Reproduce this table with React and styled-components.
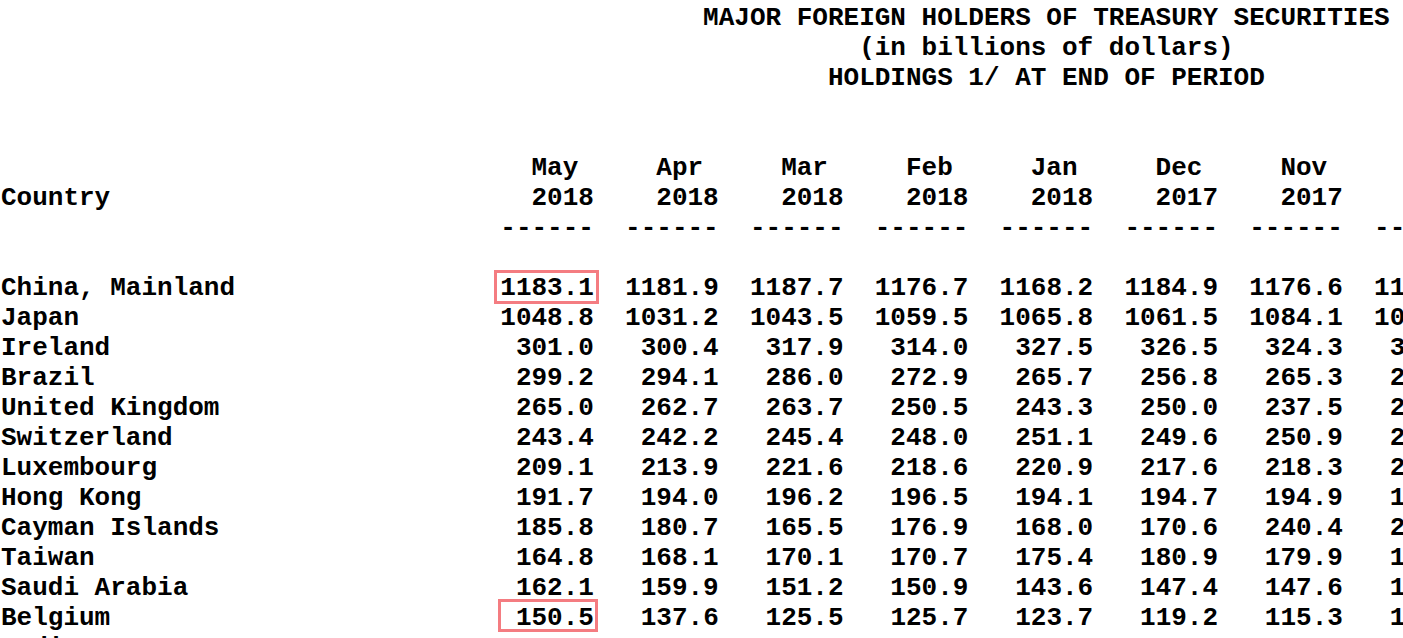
import React from 'react';
import styled, { createGlobalStyle } from 'styled-components';

const GlobalStyle = createGlobalStyle`
  html, body {
    margin: 0;
    padding: 0;
    background: #fff;
    overflow: hidden;
  }
`;

const Report = styled.div`
  padding: 3px 0 0 1px;
  font-family: "Liberation Mono", "Courier New", monospace;
  font-weight: bold;
  font-size: 26px;
  line-height: 30px;
  color: #000;
  white-space: pre;
  width: 1600px;
  height: 638px;
  overflow: hidden;
`;

const Line = styled.div`
  height: 30px;
`;

const Mark = styled.span`
  position: relative;

  &::after {
    content: '';
    position: absolute;
    inset: ${(p) => p.$inset};
    border: 3px solid #f47c81;
    pointer-events: none;
  }
`;

const title = [
  ' '.repeat(45) + 'MAJOR FOREIGN HOLDERS OF TREASURY SECURITIES',
  ' '.repeat(55) + '(in billions of dollars)',
  ' '.repeat(53) + 'HOLDINGS 1/ AT END OF PERIOD',
];

const months = ['May', 'Apr', 'Mar', 'Feb', 'Jan', 'Dec', 'Nov', 'Oct'];
const years = ['2018', '2018', '2018', '2018', '2018', '2017', '2017', '2017'];

const rows = [
  ['China, Mainland', ['1183.1', '1181.9', '1187.7', '1176.7', '1168.2', '1184.9', '1176.6', '1189.2']],
  ['Japan', ['1048.8', '1031.2', '1043.5', '1059.5', '1065.8', '1061.5', '1084.1', '1093.6']],
  ['Ireland', ['301.0', '300.4', '317.9', '314.0', '327.5', '326.5', '324.3', '319.8']],
  ['Brazil', ['299.2', '294.1', '286.0', '272.9', '265.7', '256.8', '265.3', '269.0']],
  ['United Kingdom', ['265.0', '262.7', '263.7', '250.5', '243.3', '250.0', '237.5', '222.3']],
  ['Switzerland', ['243.4', '242.2', '245.4', '248.0', '251.1', '249.6', '250.9', '248.6']],
  ['Luxembourg', ['209.1', '213.9', '221.6', '218.6', '220.9', '217.6', '218.3', '218.6']],
  ['Hong Kong', ['191.7', '194.0', '196.2', '196.5', '194.1', '194.7', '194.9', '193.4']],
  ['Cayman Islands', ['185.8', '180.7', '165.5', '176.9', '168.0', '170.6', '240.4', '227.7']],
  ['Taiwan', ['164.8', '168.1', '170.1', '170.7', '175.4', '180.9', '179.9', '178.7']],
  ['Saudi Arabia', ['162.1', '159.9', '151.2', '150.9', '143.6', '147.4', '147.6', '146.1']],
  ['Belgium', ['150.5', '137.6', '125.5', '125.7', '123.7', '119.2', '115.3', '110.3']],
  ['India', ['146.9', '143.8', '150.8', '148.2', '146.6', '147.3', '145.7', '143.1']],
];

// hand-drawn boxes around a few cells
const marks = {
  'China, Mainland': { col: 0, inset: '-3px -5px -1px -6px' },
  Belgium: { col: 0, inset: '-4px -4px 1px -2px' },
};

const field = (s) => '  ' + s.padStart(6);

function DataRow({ name, values }) {
  const mark = marks[name];
  return (
    <Line>
      {name.padEnd(30)}
      {values.map((v, i) =>
        mark && mark.col === i ? (
          <React.Fragment key={i}>
            {'  '}
            <Mark $inset={mark.inset}>{v.padStart(6)}</Mark>
          </React.Fragment>
        ) : (
          field(v)
        )
      )}
    </Line>
  );
}

export default function App() {
  return (
    <>
      <GlobalStyle />
      <Report>
        {title.map((t) => (
          <Line key={t}>{t}</Line>
        ))}
        <Line />
        <Line />
        <Line>{' '.repeat(30) + months.map((m) => field(m + ' ')).join('')}</Line>
        <Line>{'Country'.padEnd(30) + years.map(field).join('')}</Line>
        <Line>{' '.repeat(30) + years.map(() => field('------')).join('')}</Line>
        <Line />
        {rows.map(([name, values]) => (
          <DataRow key={name} name={name} values={values} />
        ))}
      </Report>
    </>
  );
}
